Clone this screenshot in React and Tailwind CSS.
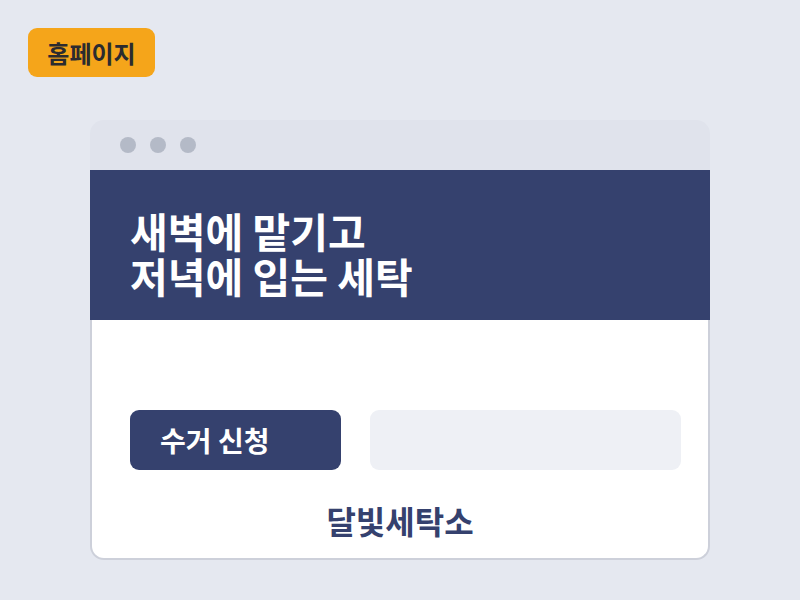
export default function App() {
  const font = { fontFamily: '"Noto Sans CJK KR", "Noto Sans", sans-serif' };
  return (
    <div className="w-[800px] h-[600px] bg-[#e5e8f0] p-[28px]" style={font}>
      {/* Badge */}
      <div className="w-[127px] h-[49px] rounded-[9px] bg-[#f5a51a] flex items-center justify-center text-[24px] font-bold text-[#2b2b2f]">
        홈페이지
      </div>

      {/* Browser window */}
      <div className="mt-[43px] ml-[62px] w-[620px] flex flex-col">
        <div className="h-[50px] rounded-t-[14px] bg-[#e0e3ec] flex items-center gap-[14px] pl-[30px]">
          <span className="w-[16px] h-[16px] rounded-full bg-[#b4bac7]" />
          <span className="w-[16px] h-[16px] rounded-full bg-[#b4bac7]" />
          <span className="w-[16px] h-[16px] rounded-full bg-[#b4bac7]" />
        </div>
        <div className="h-[150px] bg-[#35416e] pl-[40px] pt-[38px]">
          <h1 className="text-white text-[41px] font-bold leading-[45px]">
            새벽에 맡기고
            <br />
            저녁에 입는 세탁
          </h1>
        </div>
        <div className="h-[240px] bg-white border-x-2 border-b-2 border-[#cdd0da] rounded-b-[14px] pt-[90px]">
          <div className="flex gap-[29px] pl-[38px] pr-[27px]">
            <div className="w-[211px] shrink-0 h-[60px] rounded-[9px] bg-[#35416e] flex items-center pl-[30px] text-white text-[28px] font-bold">
              수거 신청
            </div>
            <div className="flex-1 h-[60px] rounded-[9px] bg-[#eef0f5]" />
          </div>
          <div className="mt-[30px] text-center text-[32px] font-bold text-[#35416e] leading-[40px]">
            달빛세탁소
          </div>
        </div>
      </div>
    </div>
  );
}
